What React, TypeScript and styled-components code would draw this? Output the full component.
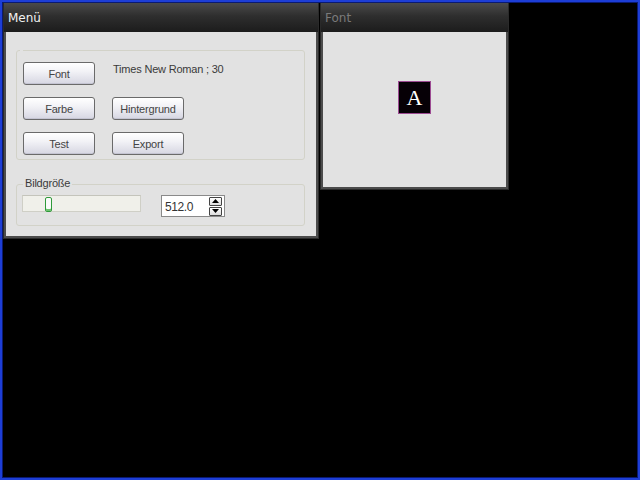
import React from "react"
import styled, { createGlobalStyle } from "styled-components"

const Global = createGlobalStyle`
  html, body {
    margin: 0;
    padding: 0;
    background: #000;
  }
  body {
    font-family: "Liberation Sans", Arial, sans-serif;
    font-size: 12px;
  }
`

const Screen = styled.div`
  box-sizing: border-box;
  width: 640px;
  height: 480px;
  border: 2px solid #1d3ed6;
  box-shadow: inset 0 0 0 1px #0a1a70;
  background: #000;
  display: flex;
  align-items: flex-start;
  gap: 1px;
  padding: 1px;
`

const Window = styled.div<{ $w: number; $h: number }>`
  box-sizing: border-box;
  width: ${(p) => p.$w}px;
  height: ${(p) => p.$h}px;
  display: flex;
  flex-direction: column;
  background: #4c4c4c;
  border: 1px solid #2a2a2a;
  border-top: none;
  padding: 0 2px 2px;
`

const TitleBar = styled.div<{ $active?: boolean }>`
  height: 29px;
  flex-shrink: 0;
  margin: 0 -2px;
  padding: 0 4px;
  display: flex;
  align-items: center;
  background: linear-gradient(#4a4a4a, #2e2e2e 45%, #1c1c1c);
  color: ${(p) => (p.$active ? "#f2f2f2" : "#7a7a7a")};
  font-family: "DejaVu Sans", "Liberation Sans", sans-serif;
  font-size: 12px;
`

const Body = styled.div`
  flex: 1;
  background: #e2e2e2;
  display: flex;
  flex-direction: column;
`

const MenuBody = styled(Body)`
  padding: 18px 11px 0 10px;
  gap: 24px;
`

const Group = styled.div<{ $h: number }>`
  position: relative;
  box-sizing: border-box;
  height: ${(p) => p.$h}px;
  border: 1px solid #d2d2c8;
  border-radius: 3px;
`

const GroupNib = styled.span`
  position: absolute;
  left: 3px;
  top: -1px;
  width: 3px;
  height: 1px;
  background: #e2e2e2;
`

const Legend = styled.span`
  position: absolute;
  left: 6px;
  top: -8px;
  padding: 0 2px;
  background: #e2e2e2;
  color: #3a3a3a;
  font-size: 11px;
  letter-spacing: -0.2px;
`

const ButtonGrid = styled.div`
  display: grid;
  grid-template-columns: 72px auto;
  grid-auto-rows: 23px;
  column-gap: 17px;
  row-gap: 12px;
  padding: 11px 0 0 6px;
`

const Button = styled.button`
  box-sizing: border-box;
  width: 72px;
  height: 23px;
  padding: 0;
  border: 1px solid #6a6a6a;
  border-radius: 3px;
  background: linear-gradient(#ffffff, #f2f2f6 40%, #d6d6e2);
  color: #444;
  font-family: "Liberation Sans", Arial, sans-serif;
  font-size: 11px;
  letter-spacing: -0.2px;
  box-shadow: inset 0 -1px 0 #c4c4d2;
`

const Info = styled.span`
  color: #3a3a3a;
  font-size: 11px;
  padding: 1px 0 0 1px;
  letter-spacing: -0.2px;
`

const SizeRow = styled.div`
  display: flex;
  align-items: flex-start;
  gap: 20px;
  padding: 10px 0 0 5px;
`

const Track = styled.div`
  position: relative;
  box-sizing: border-box;
  width: 119px;
  height: 17px;
  background: #f0f0ea;
  border: 1px solid #cfcfc6;
  border-top-color: #c4c4bb;
`

const Thumb = styled.div<{ $pos: number }>`
  position: absolute;
  top: 1px;
  left: ${(p) => p.$pos}px;
  box-sizing: border-box;
  width: 7px;
  height: 15px;
  border: 1px solid #2f9a3a;
  border-radius: 2px;
  background: #fafafa;
  box-shadow: inset 0 -2px 0 #6cc46e;
`

const Spin = styled.div`
  box-sizing: border-box;
  width: 64px;
  height: 22px;
  display: flex;
  align-items: center;
  background: #fff;
  border: 1px solid #8a8a8a;
  padding: 0 2px 0 3px;
`

const SpinValue = styled.span`
  flex: 1;
  color: #333;
  font-size: 12px;
  letter-spacing: -0.4px;
  padding-top: 2px;
`

const SpinButtons = styled.div`
  display: flex;
  flex-direction: column;
  gap: 1px;
`

const SpinButton = styled.div`
  box-sizing: border-box;
  width: 13px;
  height: 9px;
  border: 1px solid #444;
  border-radius: 1px;
  background: linear-gradient(#ffffff, #dcdcdc);
  display: flex;
  align-items: center;
  justify-content: center;
`

const FontBody = styled(Body)`
  align-items: center;
  padding-top: 49px;
`

const Preview = styled.div`
  box-sizing: border-box;
  width: 33px;
  height: 33px;
  background: #060006;
  border: 1px solid #9c4a92;
  display: flex;
  align-items: center;
  justify-content: center;
  color: #fff;
  font-family: "Liberation Serif", "Times New Roman", serif;
  font-size: 22px;
  line-height: 1;
  padding-top: 1px;
`

const Arrow = ({ up }: { up?: boolean }) => (
  <svg width="7" height="4" viewBox="0 0 7 4">
    <path d={up ? "M0 4 L3.5 0 L7 4 Z" : "M0 0 L3.5 4 L7 0 Z"} fill="#000" />
  </svg>
)

export default function App() {
  return (
    <>
      <Global />
      <Screen>
        <Window $w={316} $h={236}>
          <TitleBar $active>Menü</TitleBar>
          <MenuBody>
            <Group $h={110}>
              <GroupNib />
              <ButtonGrid>
                <Button>Font</Button>
                <Info>Times New Roman ; 30</Info>
                <Button>Farbe</Button>
                <Button>Hintergrund</Button>
                <Button>Test</Button>
                <Button>Export</Button>
              </ButtonGrid>
            </Group>
            <Group $h={42}>
              <Legend>Bildgröße</Legend>
              <SizeRow>
                <Track>
                  <Thumb $pos={22} />
                </Track>
                <Spin>
                  <SpinValue>512.0</SpinValue>
                  <SpinButtons>
                    <SpinButton>
                      <Arrow up />
                    </SpinButton>
                    <SpinButton>
                      <Arrow />
                    </SpinButton>
                  </SpinButtons>
                </Spin>
              </SizeRow>
            </Group>
          </MenuBody>
        </Window>
        <Window $w={189} $h={187}>
          <TitleBar>Font</TitleBar>
          <FontBody>
            <Preview>A</Preview>
          </FontBody>
        </Window>
      </Screen>
    </>
  )
}
